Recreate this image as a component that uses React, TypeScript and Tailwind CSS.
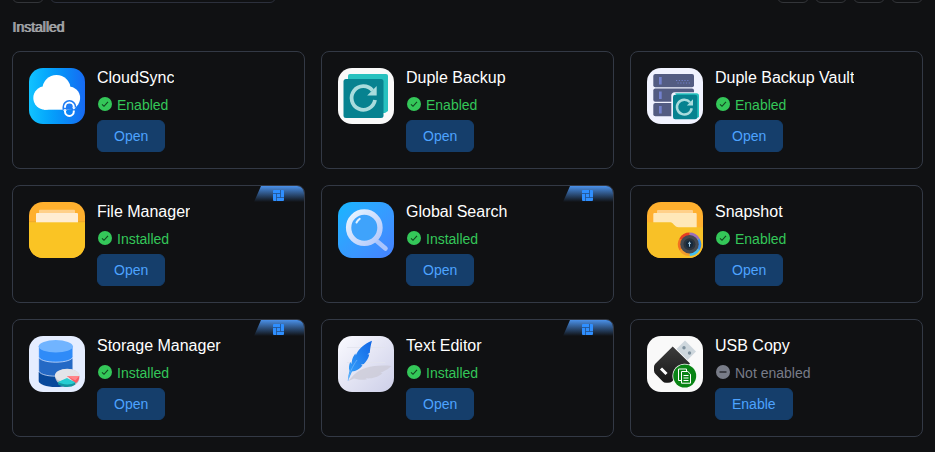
import type { ReactNode } from "react"
import { Filter, LayoutGrid, List, RefreshCw, Settings } from "lucide-react"

type Status = "Enabled" | "Installed" | "Not enabled"

interface AppItem {
  name: string
  status: Status
  icon: ReactNode
  builtIn?: boolean
}

function IconTile({ className, children }: { className: string; children: ReactNode }) {
  return (
    <div className={`size-14 shrink-0 overflow-hidden rounded-[14px] ${className}`}>
      <svg viewBox="0 0 56 56" className="size-full" aria-hidden="true">{children}</svg>
    </div>
  )
}

function CloudSyncIcon() {
  return (
    <IconTile className="bg-linear-to-r from-[#12c3ff] to-[#1769f2]">
      <g fill="#fff">
        <circle cx="27.5" cy="21" r="14" />
        <circle cx="16" cy="30" r="11.7" />
        <circle cx="39.5" cy="30" r="11.6" />
        <rect x="15" y="24" width="25" height="17.7" />
      </g>
      <path d="M33.5 41.7V39a6.900 6.900 0 0 1 13.800 0v2.700z" fill="#1f7df4" />
      <path d="M36 39.800v-.8a4.400 4.400 0 0 1 8.800 0v.8M44.800 42.500v1a4.400 4.400 0 0 1-8.800 0v-1" fill="none" stroke="#fff" strokeWidth="2" />
      <path d="M43 39.500h4l-2.200 2zM34 42.800h4l-2-2z" fill="#fff" />
    </IconTile>
  )
}

function DupleBackupIcon() {
  return (
    <IconTile className="bg-[#f9f9f9]">
      <path d="M12 6h36a2 2 0 0 1 2 2v35l-3 2H13L10 12V8a2 2 0 0 1 2-2z" fill="#27c1bf" />
      <rect x="5.5" y="11" width="40" height="39" rx="2.5" fill="#078290" />
      <path d="M34.5 22.5A11.8 11.8 0 1 0 37 32" fill="none" stroke="#a9dcdd" strokeWidth="3.8" />
      <path d="M38.7 18v9.5H29.2z" fill="#a9dcdd" />
    </IconTile>
  )
}

function DupleBackupVaultIcon() {
  return (
    <IconTile className="bg-[#f1f3ff]">
      {[6, 20.5, 35].map((y) => (
        <g key={y}>
          <rect x="6.3" y={y} width="40.7" height="13.3" rx="2" fill="#535c82" />
          <rect x="12" y={y + 3} width="2.7" height="7.5" fill="#7280cc" />
        </g>
      ))}
      <path d="M29 12.5h14M30.5 15h14" stroke="#7280cc" strokeWidth="1.2" strokeDasharray="1.2 1.6" />
      <rect x="24.3" y="24.3" width="28" height="28" rx="3.5" fill="#f1f3ff" />
      <path d="M28 25.3h21.5a2.5 2.5 0 0 1 2.5 2.5V49l-2 1z" fill="#27c1bf" />
      <rect x="26" y="26.7" width="24.3" height="24.6" rx="2.2" fill="#078290" />
      <path d="M43 34.3a7.4 7.4 0 1 0 1.7 6" fill="none" stroke="#a9dcdd" strokeWidth="2.5" />
      <path d="M46 31.3v6.2h-6.2z" fill="#a9dcdd" />
    </IconTile>
  )
}

function FileManagerIcon() {
  return (
    <IconTile className="bg-[#ffb02e]">
      <rect x="10" y="7.7" width="36" height="6" rx="1" fill="#ffd089" />
      <rect x="7" y="11" width="42" height="12" rx="1" fill="#ffedd2" />
      <path d="M0 19.300h7v1H0zM49 19.300h7v1h-7z" fill="#eca92b" />
      <rect y="20.3" width="56" height="36" fill="#fac424" />
    </IconTile>
  )
}

function GlobalSearchIcon() {
  return (
    <IconTile className="bg-linear-to-br from-[#12b6ff] to-[#4581ff]">
      <defs>
        <linearGradient id="lens-ring" x1="0" y1="0" x2="1" y2="1">
          <stop offset="0" stopColor="#e9f5ff" />
          <stop offset="1" stopColor="#b3c8fb" />
        </linearGradient>
      </defs>
      <path d="M37.5 38 47.5 46.5" stroke="#a9c4fc" strokeWidth="4.6" strokeLinecap="round" />
      <circle cx="26.3" cy="25.7" r="15.7" fill="#3fa3fb" stroke="url(#lens-ring)" strokeWidth="5.4" />
      <path d="M18.5 20.5a9 9 0 0 1 3.2-3.6" fill="none" stroke="#e4f3ff" strokeWidth="2" strokeLinecap="round" />
    </IconTile>
  )
}

function SnapshotIcon() {
  return (
    <IconTile className="bg-[#ffb02e]">
      <rect x="10" y="8" width="36" height="6" rx="1" fill="#ffd089" />
      <rect x="6.3" y="11" width="43.4" height="18" rx="1" fill="#ffe8b8" />
      <path d="M0 20.3h23.5c2.5 0 4 4.9 8 4.9H56V56H0z" fill="#f8c127" />
      <path d="M42.5 30.6a11.7 11.7 0 0 1 10.1 5.8L42.5 42.3z" fill="#9b6fbb" />
      <path d="M52.6 36.4a11.7 11.7 0 0 1 0 11.8L42.5 42.3z" fill="#3d8fe8" />
      <path d="M52.6 48.2A11.7 11.7 0 0 1 42.5 54V42.3z" fill="#42bdf0" />
      <path d="M42.5 54a11.7 11.7 0 0 1-10.1-5.8l10.1-5.9z" fill="#f19b2c" />
      <path d="M32.4 48.2a11.7 11.7 0 0 1 0-11.8l10.1 5.9z" fill="#f2701f" />
      <path d="M32.4 36.4a11.7 11.7 0 0 1 10.1-5.8v11.7z" fill="#e43e24" />
      <circle cx="42.5" cy="42.3" r="9.2" fill="#454950" />
      <circle cx="42.5" cy="42.3" r="6" fill="#2b333d" />
      <circle cx="42.5" cy="42.3" r="3.7" fill="#14283c" />
      <path d="M42.5 39.7v5M41 41.3h3" stroke="#9fc6df" strokeWidth="1" />
    </IconTile>
  )
}

function StorageManagerIcon() {
  return (
    <IconTile className="bg-[#e5edff]">
      <path d="M9.7 36v9c0 3.3 7.6 6 17.1 6s17.1-2.7 17.1-6v-9z" fill="#07489b" />
      <path d="M9.7 22v12.5c0 3.3 7.6 5.7 17.1 5.7s17.1-2.4 17.1-5.7V22z" fill="#2469c5" stroke="#e5edff" strokeWidth=".7" />
      <path d="M9.7 10v10.5c0 3.3 7.6 5.7 17.1 5.7s17.1-2.4 17.1-5.7V10z" fill="#2f8bf8" stroke="#e5edff" strokeWidth=".7" />
      <ellipse cx="26.8" cy="10.3" rx="17.1" ry="6.2" fill="#71b4ff" />
      <path d="M26 40c0-4 5.5-7 12.5-7s11.8 3 11.8 6.5V42c0 5-5 8.500-12 8.500S26 45 26 40z" fill="#bfc3cc" />
      <ellipse cx="38.2" cy="39.5" rx="12.3" ry="6.7" fill="#e3e4e9" />
      <path d="M38 40h12.3c0 3.5-1 5.5-3.6 7.3z" fill="#fa5c66" />
      <path d="M38 40h12.3l-4 4.5z" fill="#ff8589" />
      <path d="M38 43l8.3 3.5v2c-4 3.4-12.5 3.4-17.3-.3v-2z" fill="#15949f" />
      <path d="M38 42l8.300 4.500c-4 2.700-12.800 2.700-17.300-.5z" fill="#27cdd2" />
    </IconTile>
  )
}

function TextEditorIcon() {
  return (
    <IconTile className="bg-linear-to-br from-[#fafaff] to-[#cdcfe8]">
      <defs>
        <linearGradient id="feather" x1="1" y1="0" x2="0" y2="1">
          <stop offset="0" stopColor="#1166e6" />
          <stop offset="1" stopColor="#38a4fb" />
        </linearGradient>
      </defs>
      <path d="M9 11.500h38M9 26.500h38" stroke="#e2e3ee" strokeWidth=".8" />
      <path d="M10.500 45c4-5 9-11 17-13 9-2.500 17-3 26-2-4 4-8 5-11 7l2 .3c-6 5-12 5.500-17 5l1.500 1c-6 1.500-11-.5-13-.8z" fill="#cbcad6" opacity=".75" />
      <path d="M10 44.500c.2-5 1-7 1.500-9.500-1-3.500-.5-6.500.8-9l1.200 2c.5-5 1.500-7.500 4-10.500l.3 2C20 13 26 8 34 4.700c-1.500 5-2 9-2.200 12l-2.300 1.500 1.800.3c-.8 4-3 7-5.500 9.500l-3 .8 1.700.7c-3 4-6.500 5.500-10.500 6z" fill="url(#feather)" />
      <path d="M10 45c1.500-8 4-14 9-21" fill="none" stroke="#7fc0ff" strokeWidth=".6" />
    </IconTile>
  )
}

function UsbCopyIcon() {
  return (
    <IconTile className="bg-[#f9f9f9]">
      <defs>
        <linearGradient id="usb-body" x1="0" y1="0" x2="0" y2="1">
          <stop offset="0" stopColor="#3c3c3c" />
          <stop offset="1" stopColor="#171717" />
        </linearGradient>
      </defs>
      <path d="M38 4.5 49 15.5 40.5 24 29.5 13z" fill="#ced7dd" />
      <circle cx="37" cy="11.7" r="1.7" fill="#7e909d" />
      <circle cx="42.5" cy="17" r="1.7" fill="#7e909d" />
      <path d="M25.7 10.5 43 27.5 25 45.5q-1.500 1.200-4 1.200h-2q-2 0-3.500-1.500L8.500 38Q7 36.500 7 34.500V31q0-2 1.300-3.300z" fill="url(#usb-body)" />
      <path d="M14 32.500l5.500 5.500" stroke="#fff" strokeWidth="3" />
      <circle cx="37.7" cy="40" r="12.3" fill="#f9f9f9" />
      <circle cx="37.7" cy="40" r="11.5" fill="#088414" />
      <g fill="#088414" stroke="#fff" strokeWidth="1">
        <path d="M31.5 33h8v11.5h-8z" />
        <path d="M34.5 35.500h6.300l2.700 2.700v9h-9z" />
        <path d="M36.500 39.500h5M36.500 42h5M36.500 44.500h5" />
      </g>
    </IconTile>
  )
}

const apps: AppItem[] = [
  { name: "CloudSync", status: "Enabled", icon: <CloudSyncIcon /> },
  { name: "Duple Backup", status: "Enabled", icon: <DupleBackupIcon /> },
  { name: "Duple Backup Vault", status: "Enabled", icon: <DupleBackupVaultIcon /> },
  { name: "File Manager", status: "Installed", icon: <FileManagerIcon />, builtIn: true },
  { name: "Global Search", status: "Installed", icon: <GlobalSearchIcon />, builtIn: true },
  { name: "Snapshot", status: "Enabled", icon: <SnapshotIcon /> },
  { name: "Storage Manager", status: "Installed", icon: <StorageManagerIcon />, builtIn: true },
  { name: "Text Editor", status: "Installed", icon: <TextEditorIcon />, builtIn: true },
  { name: "USB Copy", status: "Not enabled", icon: <UsbCopyIcon /> },
]

const viewActions = [
  { label: "Refresh", Icon: RefreshCw },
  { label: "Grid view", Icon: LayoutGrid },
  { label: "List view", Icon: List },
  { label: "Settings", Icon: Settings },
]

function BuiltInRibbon() {
  return (
    <svg className="absolute top-0 right-0" width="51" height="16" viewBox="0 0 51 16" aria-hidden="true">
      <defs>
        <linearGradient id="ribbon" x1="0" y1="0" x2="0" y2="1">
          <stop offset="0" stopColor="#4a90e8" />
          <stop offset="1" stopColor="#4a90e8" stopOpacity="0" />
        </linearGradient>
      </defs>
      <path d="M8 0h43v16H1z" fill="url(#ribbon)" />
      <rect x="20" y="4" width="11" height="11" rx="1" fill="#2f8fff" />
      <path d="M20 7.500h7.500M23.500 7.500V15M27.500 4v7.500M23.500 11.500H31" stroke="#22508c" strokeWidth=".8" fill="none" />
    </svg>
  )
}

function StatusIcon({ status }: { status: Status }) {
  if (status === "Not enabled") {
    return (
      <svg width="16" height="16" viewBox="0 0 16 16" aria-hidden="true">
        <circle cx="8" cy="7" r="7" fill="#787c88" />
        <path d="M4.5 7h7" stroke="#2b2d33" strokeWidth="1.5" />
      </svg>
    )
  }
  return (
    <svg width="16" height="16" viewBox="0 0 16 16" aria-hidden="true">
      <circle cx="8" cy="7" r="7" fill="#34c759" />
      <path d="M5 7.300l2 2 4-4.500" fill="none" stroke="#12431f" strokeWidth="1.1" />
    </svg>
  )
}

function AppCard({ app }: { app: AppItem }) {
  const disabled = app.status === "Not enabled"
  return (
    <li className="relative flex gap-3 overflow-hidden rounded-lg border border-[#333945] p-4">
      {app.builtIn && <BuiltInRibbon />}
      {app.icon}
      <div className="min-w-0">
        <h3 className="mb-[9px] truncate text-base leading-5 text-white">{app.name}</h3>
        <p className={`mb-[7px] flex h-4 items-center gap-1 text-sm leading-4 ${disabled ? "text-[#787c88]" : "text-[#34c759]"}`}>
          <StatusIcon status={app.status} />
          {app.status}
        </p>
        <button type="button" className="flex h-8 items-center rounded-md border border-[#153e6b] bg-[#153e6b] px-4 text-sm text-[#4da3ff] hover:bg-[#1a4b80]">
          {disabled ? "Enable" : "Open"}
        </button>
      </div>
    </li>
  )
}

export default function App() {
  return (
    <div className="min-h-screen bg-[#101113] px-3 pb-4 font-['Liberation_Sans',Arial,sans-serif]">
      {/* toolbar is scrolled almost out of view */}
      <div className="flex h-[3px] items-end gap-1.5 overflow-hidden">
        <button type="button" aria-label="Filter" className="flex size-8 shrink-0 items-center justify-center rounded-md border border-[#333539] text-[#a0a4ad]">
          <Filter size={16} />
        </button>
        <input type="search" aria-label="Search apps" className="h-8 w-[226px] rounded-md border border-[#2c303c] bg-transparent px-3 text-sm text-white" />
        <div className="ml-auto flex gap-1.5">
          {viewActions.map(({ label, Icon }) => (
            <button key={label} type="button" aria-label={label} className="flex size-8 items-center justify-center rounded-md border border-[#333539] text-[#a0a4ad]">
              <Icon size={16} />
            </button>
          ))}
        </div>
      </div>

      <h2 className="mt-3.5 mb-3.5 text-sm leading-5 text-[#a3a5a8] text-shadow-[1px_0_0_#a3a5a8]">Installed</h2>

      <ul className="grid grid-cols-3 gap-4">
        {apps.map((app) => (
          <AppCard key={app.name} app={app} />
        ))}
      </ul>
    </div>
  )
}
